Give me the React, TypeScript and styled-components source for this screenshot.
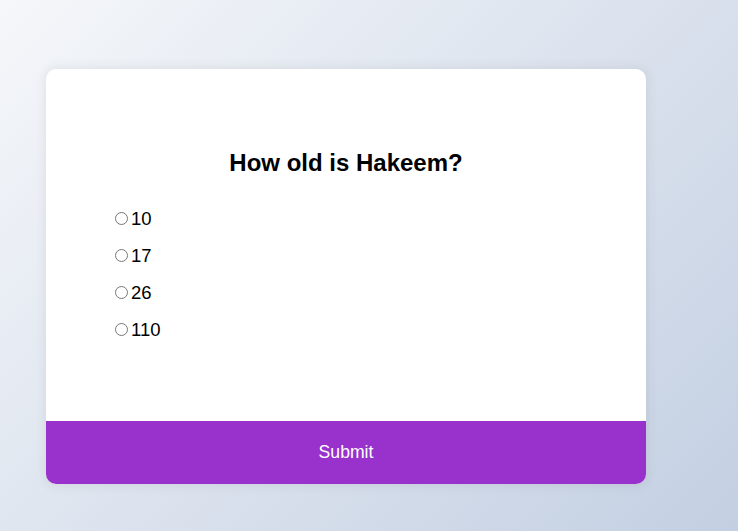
import React from "react";
import styled, { createGlobalStyle } from "styled-components";

const Global = createGlobalStyle`
  * { box-sizing: border-box; }
  html, body { margin: 0; height: 100%; }
  body {
    font-family: "Liberation Sans", Arial, sans-serif;
    background: linear-gradient(135deg, #f5f7fa 0%, #c3cfe2 100%);
    overflow: hidden;
  }
`;

const Page = styled.div`
  width: 738px;
  height: 531px;
  padding: 69px 0 0 46px;
`;

const Card = styled.div`
  width: 600px;
  background: #fff;
  border-radius: 10px;
  box-shadow: 0 0 10px 2px rgba(100, 100, 100, 0.1);
  overflow: hidden;
`;

const Header = styled.div`
  padding: 64px 64px 65px;
`;

const Title = styled.h2`
  margin: 0;
  padding: 16px;
  text-align: center;
  font-size: 24px;
  font-weight: 700;
  color: #000;
`;

const List = styled.ul`
  list-style: none;
  display: flex;
  flex-direction: column;
  gap: 16px;
  margin: 15px 0 16px;
  padding: 0;
`;

const Item = styled.li`
  font-size: 18.5px;
  margin: 0;
  line-height: 21px;
  color: #000;
`;

const Label = styled.label`
  display: inline-flex;
  align-items: center;
  cursor: pointer;
`;

const Radio = styled.input`
  width: 13px;
  height: 13px;
  margin: 0 3px 0 5px;
`;

const SubmitButton = styled.button`
  display: block;
  width: 100%;
  border: none;
  background: #9932cc;
  color: #fff;
  font-family: inherit;
  font-size: 17.6px;
  padding: 21px;
  line-height: 21px;
  cursor: pointer;
`;

const answers = ["10", "17", "26", "110"];

export default function App() {
  return (
    <>
      <Global />
      <Page>
        <Card>
          <Header>
            <Title>How old is Hakeem?</Title>
            <List>
              {answers.map((a) => (
                <Item key={a}>
                  <Label>
                    <Radio type="radio" name="answer" value={a} />
                    {a}
                  </Label>
                </Item>
              ))}
            </List>
          </Header>
          <SubmitButton>Submit</SubmitButton>
        </Card>
      </Page>
    </>
  );
}
